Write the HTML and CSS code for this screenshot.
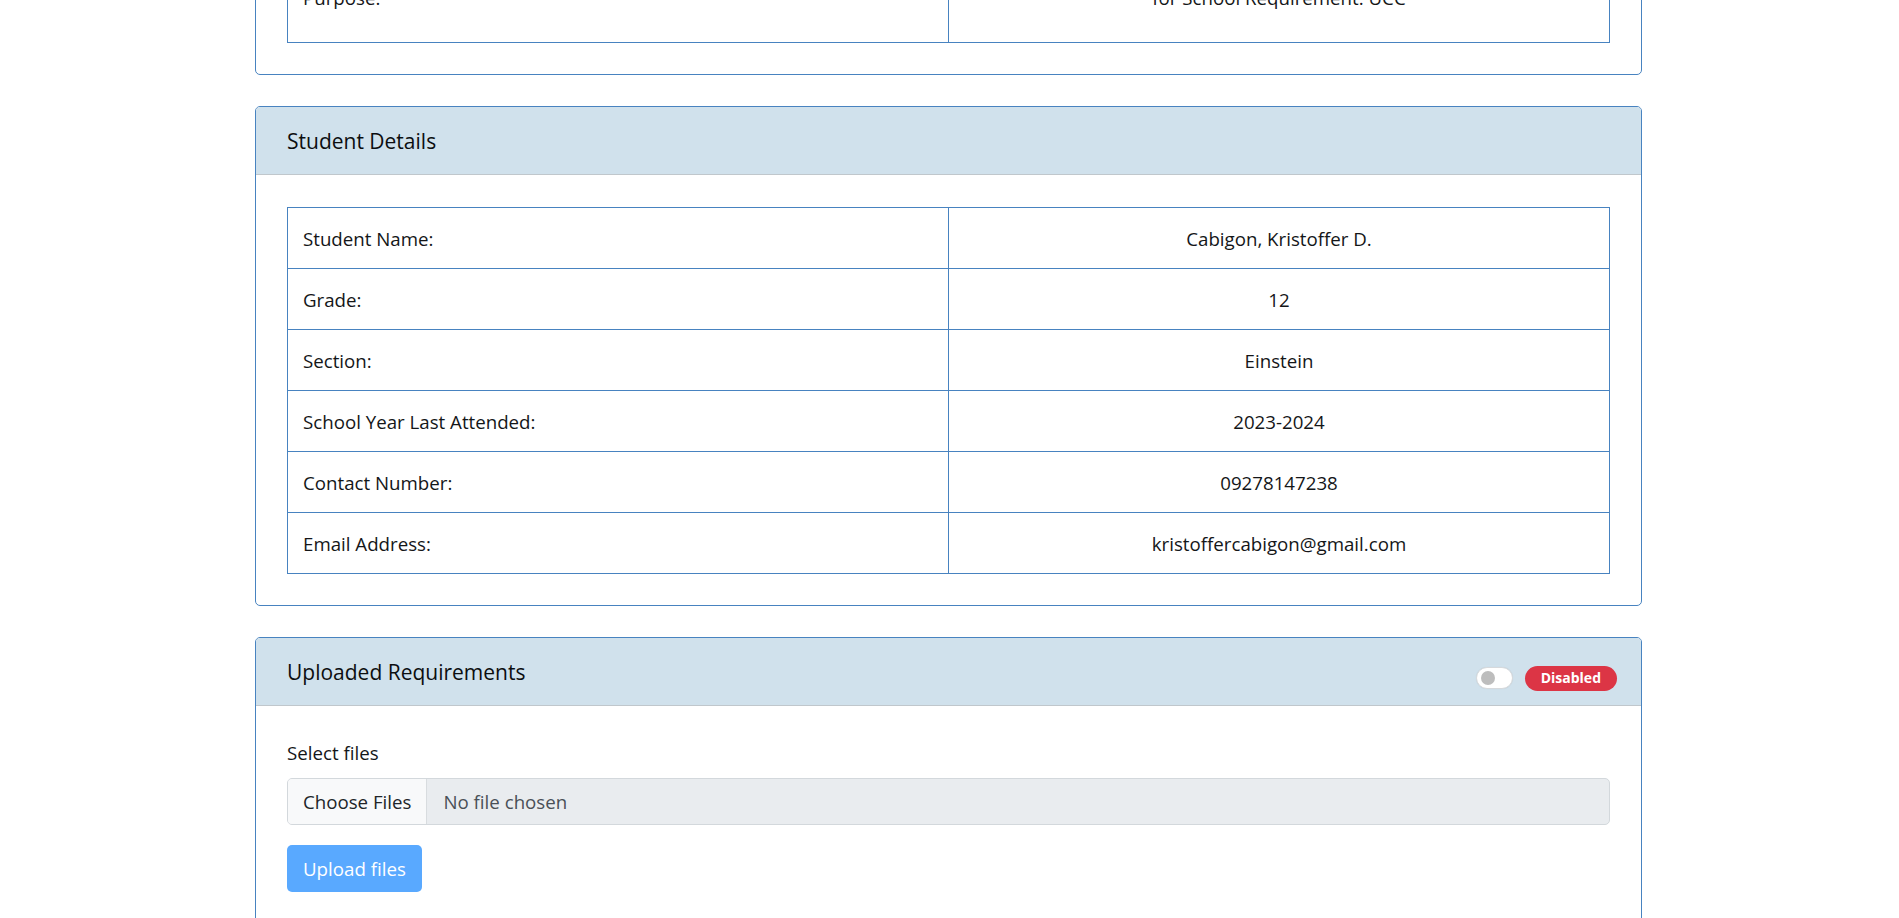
FILE: index.html
```html
<!DOCTYPE html>
<html lang="en">
<head>
<meta charset="utf-8">
<title>Request Details</title>
<link rel="stylesheet" href="styles.css">
</head>
<body>
<main class="page">
  <section class="card card-first">
    <div class="card-body">
      <table class="info-table">
        <tr class="row-tall">
          <td>Purpose:</td>
          <td class="value">for School Requirement: UCC</td>
        </tr>
      </table>
    </div>
  </section>

  <section class="card">
    <header class="card-header">
      <h5 class="card-title">Student Details</h5>
    </header>
    <div class="card-body">
      <table class="info-table">
        <tr><td>Student Name:</td><td class="value">Cabigon, Kristoffer D.</td></tr>
        <tr><td>Grade:</td><td class="value">12</td></tr>
        <tr><td>Section:</td><td class="value">Einstein</td></tr>
        <tr><td>School Year Last Attended:</td><td class="value">2023-2024</td></tr>
        <tr><td>Contact Number:</td><td class="value">09278147238</td></tr>
        <tr><td>Email Address:</td><td class="value">kristoffercabigon@gmail.com</td></tr>
      </table>
    </div>
  </section>

  <section class="card">
    <header class="card-header">
      <h5 class="card-title">Uploaded Requirements</h5>
      <div class="header-controls">
        <span class="switch" role="switch" aria-checked="false"><span class="knob"></span></span>
        <span class="badge badge-danger">Disabled</span>
      </div>
    </header>
    <div class="card-body">
      <div class="form-label">Select files</div>
      <div class="file-input">
        <span class="file-btn">Choose Files</span>
        <span class="file-text">No file chosen</span>
      </div>
      <button class="btn-upload" type="button" disabled>Upload files</button>
    </div>
  </section>
</main>
</body>
</html>
```

FILE: styles.css
```css
html, body {
  margin: 0;
  padding: 0;
  background: #ffffff;
}

body {
  font-family: "Open Sans", "Noto Sans", sans-serif;
  font-size: 18.7px;
  line-height: 28px;
  color: #141618;
}

.page {
  display: flex;
  flex-direction: column;
  align-items: center;
  padding-right: 2px;
}

.card {
  width: 1387px;
  box-sizing: border-box;
  border: 1px solid #4883c0;
  border-radius: 5px;
  background: #ffffff;
  margin-bottom: 31px;
}

.card-first {
  margin-top: -67px;
}

.card-header {
  display: flex;
  justify-content: space-between;
  align-items: center;
  background: #d0e1ec;
  border-bottom: 1px solid #c0c7cc;
  border-radius: 4px 4px 0 0;
  padding: 21px 24px 19px 31px;
  height: 68px;
  box-sizing: border-box;
}

.card-title {
  margin: 0;
  font-size: 21px;
  font-weight: 400;
  line-height: 27px;
  color: #0c0e10;
}

.card-body {
  padding: 32px 31px 31px 31px;
}

.info-table {
  width: 100%;
  table-layout: fixed;
  border-collapse: separate;
  border-spacing: 0;
  border-top: 1px solid #4883c0;
  border-left: 1px solid #4883c0;
}

.info-table td {
  width: 50%;
  padding: 17px 15px 15px 15px;
  border-right: 1px solid #4883c0;
  border-bottom: 1px solid #4883c0;
  vertical-align: top;
}

.info-table td.value {
  text-align: center;
}

.info-table .row-tall td {
  padding-bottom: 30px;
}

.header-controls {
  display: flex;
  align-items: center;
  gap: 12px;
  padding-top: 11px;
}

.switch {
  display: inline-flex;
  align-items: center;
  width: 37px;
  height: 22px;
  box-sizing: border-box;
  border: 1px solid #d6d9dc;
  border-radius: 11px;
  background: #ffffff;
  padding-left: 4px;
  box-shadow: 0 0 1px rgba(0, 0, 0, 0.08);
}

.knob {
  width: 14px;
  height: 14px;
  border-radius: 50%;
  background: #bdbdbd;
}

.badge {
  display: inline-flex;
  align-items: center;
  justify-content: center;
  height: 25px;
  padding: 0 16px;
  border-radius: 13px;
  font-size: 14px;
  font-weight: 700;
  line-height: 1;
  color: #ffffff;
}

.badge-danger {
  background: #dc3545;
}

.form-label {
  margin-bottom: 11px;
  padding-top: 1px;
}

.file-input {
  display: flex;
  align-items: stretch;
  height: 47px;
  box-sizing: border-box;
  border: 1px solid #d3d8dc;
  border-radius: 5px;
  background: #e9ecef;
  overflow: hidden;
}

.file-btn {
  display: flex;
  align-items: center;
  padding: 0 15px;
  background: #f8f9fa;
  border-right: 1px solid #d8dcdf;
  color: #212529;
}

.file-text {
  display: flex;
  align-items: center;
  padding-left: 16px;
  color: #495057;
}

.btn-upload {
  display: block;
  margin-top: 20px;
  height: 47px;
  padding: 0 16px;
  border: 0;
  border-radius: 5px;
  background: #59a9ff;
  color: #ffffff;
  font-family: inherit;
  font-size: 18.7px;
  line-height: 28px;
}
```
